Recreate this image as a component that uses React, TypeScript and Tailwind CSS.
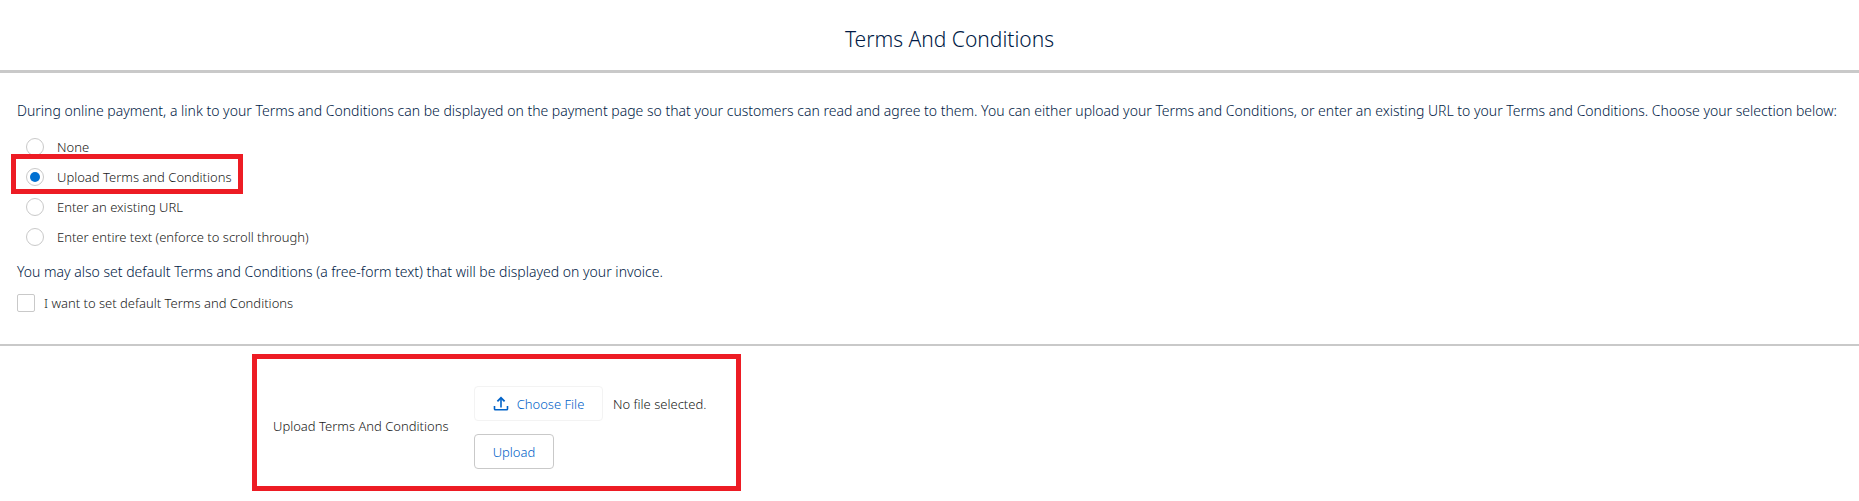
import React, { useRef, useState } from 'react';

const options = [
  { id: 'none', label: 'None' },
  { id: 'upload', label: 'Upload Terms and Conditions' },
  { id: 'url', label: 'Enter an existing URL' },
  { id: 'text', label: 'Enter entire text (enforce to scroll through)' },
];

const UploadIcon = () => (
  <svg width="16" height="16" viewBox="0 0 16 16" fill="none" stroke="currentColor" aria-hidden="true">
    <path d="M8 11.5V2.5" strokeWidth="1.6" />
    <path d="M4.4 5.4 8 1.8l3.6 3.6" strokeWidth="1.8" />
    <path d="M1.5 10v3q0 .8.8.8h11.4q.8 0 .8-.8v-3" strokeWidth="1.6" />
  </svg>
);

const App = () => {
  const [selected, setSelected] = useState('upload');
  const [useDefault, setUseDefault] = useState(false);
  const [fileName, setFileName] = useState('');
  const fileInput = useRef<HTMLInputElement>(null);

  return (
    <main className="bg-white font-['Noto_Sans','Open_Sans',sans-serif] text-[13px] leading-5 font-light text-[#1a1a1a]">
      <header className="border-b-3 border-[#c9c9c9] pt-6 pb-4 pl-10 text-center">
        <h1 className="text-[21px] leading-[30px] text-[#001a45]">Terms And Conditions</h1>
      </header>

      <section className="border-b-2 border-[#c9c9c9] px-[17px] pt-7 pb-[31px]">
        <p className="text-sm text-[#001a45]">
          During online payment, a link to your Terms and Conditions can be displayed on the payment page so that your
          customers can read and agree to them. You can either upload your Terms and Conditions, or enter an existing URL
          to your Terms and Conditions. Choose your selection below:
        </p>

        <fieldset className="mt-[11px] pl-[9px]">
          <legend className="sr-only">Terms and Conditions source</legend>
          {options.map((option) => (
            <div key={option.id} className="relative flex h-[30px] items-center">
              <input
                type="radio"
                id={option.id}
                name="terms"
                checked={selected === option.id}
                onChange={() => setSelected(option.id)}
                className="grid size-[18px] appearance-none place-items-center rounded-full border border-[#c9c9c9] bg-white checked:before:size-[10px] checked:before:rounded-full checked:before:bg-[#0070d2] checked:before:content-['']"
              />
              <label htmlFor={option.id} className="ml-[13px] leading-4">
                {option.label}
              </label>
              {option.id === 'upload' && (
                <span className="pointer-events-none absolute -top-2 -left-[15px] h-10 w-[232px] border-5 border-[#ed1c24]" />
              )}
            </div>
          ))}
        </fieldset>

        <p className="mt-[10px] text-sm text-[#001a45]">
          You may also set default Terms and Conditions (a free-form text) that will be displayed on your invoice.
        </p>
        <div className="mt-[11px] flex items-center">
          <input
            type="checkbox"
            id="default-terms"
            checked={useDefault}
            onChange={(e) => setUseDefault(e.target.checked)}
            className="size-[18px] appearance-none rounded-xs border border-[#c9c9c9] bg-white checked:bg-[#0070d2]"
          />
          <label htmlFor="default-terms" className="ml-[9px]">
            I want to set default Terms and Conditions
          </label>
        </div>
      </section>

      {/* Upload form */}
      <section className="mt-2 ml-[252px] flex w-[489px] items-center border-5 border-[#ed1c24] pt-[27px] pb-[17px] pl-4">
        <label htmlFor="terms-file" className="w-[201px] shrink-0 pb-1 whitespace-nowrap">
          Upload Terms And Conditions
        </label>
        <div className="flex flex-col items-start gap-[13px]">
          <div className="flex items-center">
            <button
              type="button"
              onClick={() => fileInput.current?.click()}
              className="flex h-[35px] w-[129px] items-center justify-center gap-2 whitespace-nowrap rounded border border-[#f3f3f3] font-light text-[#0062c8]"
            >
              <UploadIcon />
              Choose File
            </button>
            <input
              ref={fileInput}
              type="file"
              id="terms-file"
              className="hidden"
              onChange={(e) => setFileName(e.target.files?.[0]?.name ?? '')}
            />
            <span className="ml-[10px] whitespace-nowrap">{fileName || 'No file selected.'}</span>
          </div>
          <button type="button" className="h-[35px] w-20 rounded border border-[#c9c9c9] text-[#0062c8]">
            Upload
          </button>
        </div>
      </section>
    </main>
  );
};

export default App;
